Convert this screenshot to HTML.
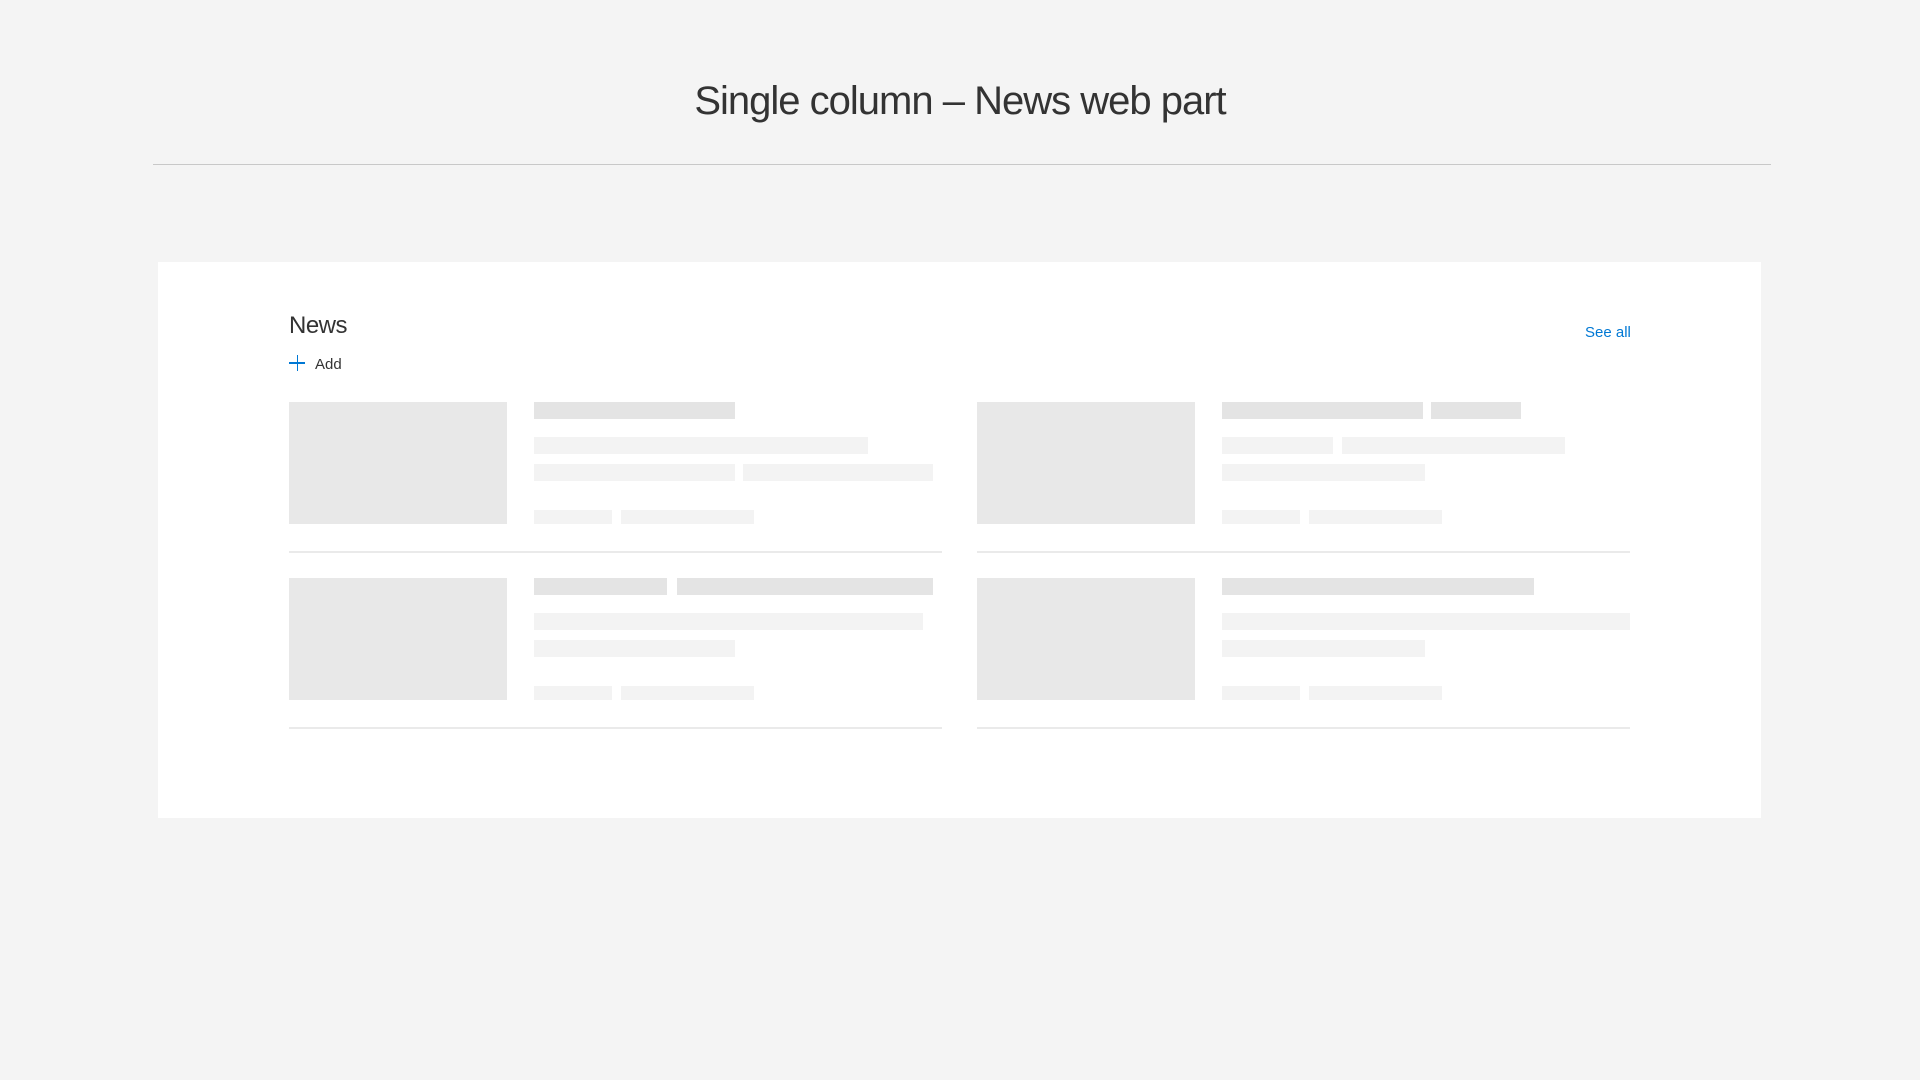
<!DOCTYPE html>
<html><head><meta charset="utf-8"><style>
body{margin:0;width:1920px;height:1080px;background:#f4f4f4;position:relative;overflow:hidden;font-family:"Liberation Sans",sans-serif}
div{position:absolute}
.t{background:#e8e8e8}.h{background:#e4e4e4}.l{background:#f3f3f3}.d{background:#eaeaea;height:2px}
</style></head><body>
<div style="left:0;width:1920px;top:79px;text-align:center;font-size:40px;font-weight:300;color:#333;line-height:44px;letter-spacing:-1px">Single column – News web part</div>
<div style="left:153px;width:1618px;top:164px;height:1px;background:#c8c8c8"></div>
<div style="left:158px;top:262px;width:1603px;height:556px;background:#fff"></div>
<div style="left:289px;top:312px;font-size:24px;color:#333;line-height:28px;letter-spacing:-0.5px">News</div>
<div style="left:289px;top:362px;width:16px;height:1.5px;background:#0078d4"></div>
<div style="left:296.5px;top:355px;width:1.5px;height:16px;background:#0078d4"></div>
<div style="left:315px;top:356px;font-size:15px;color:#333;line-height:18px">Add</div>
<div style="left:1585px;top:324px;font-size:15px;color:#0078d4;line-height:18px">See all</div>

<div class="t" style="left:289px;top:402px;width:218px;height:122px"></div>
<div class="h" style="left:534px;top:402px;width:201px;height:17px"></div>
<div class="l" style="left:534px;top:437px;width:334px;height:17px"></div>
<div class="l" style="left:534px;top:464px;width:201px;height:17px"></div>
<div class="l" style="left:743px;top:464px;width:190px;height:17px"></div>
<div class="l" style="left:534px;top:510px;width:78px;height:14px"></div>
<div class="l" style="left:621px;top:510px;width:133px;height:14px"></div>
<div class="d" style="left:289px;top:551px;width:653px"></div>

<div class="t" style="left:289px;top:578px;width:218px;height:122px"></div>
<div class="h" style="left:534px;top:578px;width:133px;height:17px"></div>
<div class="h" style="left:677px;top:578px;width:256px;height:17px"></div>
<div class="l" style="left:534px;top:613px;width:389px;height:17px"></div>
<div class="l" style="left:534px;top:640px;width:201px;height:17px"></div>
<div class="l" style="left:534px;top:686px;width:78px;height:14px"></div>
<div class="l" style="left:621px;top:686px;width:133px;height:14px"></div>
<div class="d" style="left:289px;top:727px;width:653px"></div>

<div class="t" style="left:977px;top:402px;width:218px;height:122px"></div>
<div class="h" style="left:1222px;top:402px;width:201px;height:17px"></div>
<div class="h" style="left:1431px;top:402px;width:90px;height:17px"></div>
<div class="l" style="left:1222px;top:437px;width:111px;height:17px"></div>
<div class="l" style="left:1342px;top:437px;width:223px;height:17px"></div>
<div class="l" style="left:1222px;top:464px;width:203px;height:17px"></div>
<div class="l" style="left:1222px;top:510px;width:78px;height:14px"></div>
<div class="l" style="left:1309px;top:510px;width:133px;height:14px"></div>
<div class="d" style="left:977px;top:551px;width:653px"></div>

<div class="t" style="left:977px;top:578px;width:218px;height:122px"></div>
<div class="h" style="left:1222px;top:578px;width:312px;height:17px"></div>
<div class="l" style="left:1222px;top:613px;width:408px;height:17px"></div>
<div class="l" style="left:1222px;top:640px;width:203px;height:17px"></div>
<div class="l" style="left:1222px;top:686px;width:78px;height:14px"></div>
<div class="l" style="left:1309px;top:686px;width:133px;height:14px"></div>
<div class="d" style="left:977px;top:727px;width:653px"></div>
</body></html>
